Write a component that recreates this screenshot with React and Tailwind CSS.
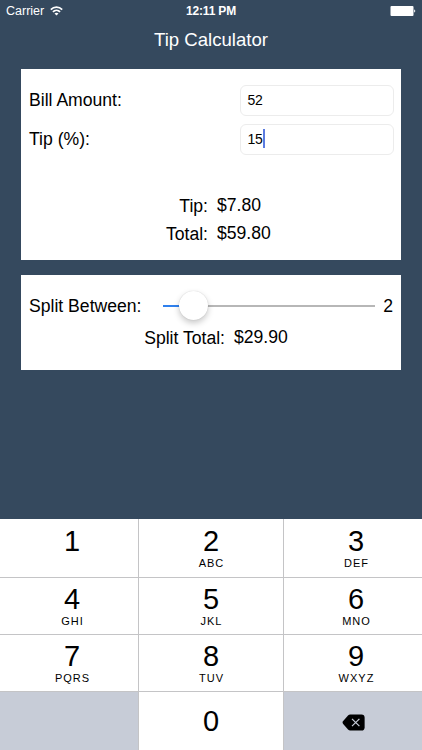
import React, { useState } from 'react';

const keys = [
  { digit: '1', letters: '' },
  { digit: '2', letters: 'ABC' },
  { digit: '3', letters: 'DEF' },
  { digit: '4', letters: 'GHI' },
  { digit: '5', letters: 'JKL' },
  { digit: '6', letters: 'MNO' },
  { digit: '7', letters: 'PQRS' },
  { digit: '8', letters: 'TUV' },
  { digit: '9', letters: 'WXYZ' },
];

// The outer columns run slightly past the middle of their cells
const columnPadding = ['pl-[6px]', 'pl-0', 'pl-[6px]'];

const MAX_SPLIT = 8;

function StatusBar() {
  return (
    <div className="grid h-[22px] grid-cols-3 items-center pl-[6px] pr-[6px] text-white">
      <div className="flex items-center gap-[6px]">
        <span className="text-[12.5px] leading-[22px]">Carrier</span>
        <svg width="13" height="10" viewBox="0 0 13 10" fill="none" stroke="currentColor" strokeWidth="1.7">
          <path d="M0.8 3.6C4 0.4 9 0.4 12.2 3.6" />
          <path d="M2.9 5.9C4.9 3.9 8.1 3.9 10.1 5.9" />
          <path d="M6.5 9.4L4.5 7.4C5.6 6.4 7.4 6.4 8.5 7.4Z" fill="currentColor" stroke="none" />
        </svg>
      </div>
      <span className="text-center text-[12px] font-bold leading-[22px] tracking-[-0.15px]">12:11 PM</span>
      <svg className="justify-self-end" width="26" height="10" viewBox="0 0 26 10" fill="currentColor">
        <rect x="0.5" y="0" width="23" height="10" rx="1" />
        <path d="M24.2 3.4C25.6 3.8 25.6 6.2 24.2 6.6Z" />
      </svg>
    </div>
  );
}

function Field({ label, value, focused, onFocus }) {
  return (
    <div className="flex h-[31px] items-center justify-between pl-2 pr-[7px]">
      <span className="text-[17.6px]">{label}</span>
      <div
        onClick={onFocus}
        className="flex h-[31px] w-[154px] items-center rounded-[6px] border border-[#ececec] pl-[6.5px]"
      >
        <span className="text-[14px] tracking-[-0.2px]">{value}</span>
        {focused && <span className="-mt-[2px] h-[19px] w-[2px] bg-[#5b7be0]" />}
      </div>
    </div>
  );
}

function Result({ label, value, labelWidth }) {
  return (
    <div className="flex h-[28px] items-center gap-[9px] text-[17.6px]">
      <span className={`${labelWidth} text-right`}>{label}</span>
      <span className="-mt-px">{value}</span>
    </div>
  );
}

function Key({ digit, letters, padding, onPress }) {
  return (
    <button onClick={() => onPress(digit)} className={`flex flex-col items-center bg-white ${padding}`}>
      <span className="text-[29px] leading-[32px]">{digit}</span>
      {letters && <span className="mt-[-1px] pl-px text-[11px] leading-[14px] tracking-[1px]">{letters}</span>}
    </button>
  );
}

export default function App() {
  const [values, setValues] = useState({ bill: '52', tip: '15' });
  const [active, setActive] = useState('tip');
  const [split, setSplit] = useState(2);

  const bill = Number(values.bill) || 0;
  const tip = (bill * (Number(values.tip) || 0)) / 100;
  const total = bill + tip;
  const progress = (split - 1) / (MAX_SPLIT - 1);

  const press = (digit) => setValues({ ...values, [active]: values[active] + digit });
  const erase = () => setValues({ ...values, [active]: values[active].slice(0, -1) });

  return (
    <div className="flex h-[750px] w-[422px] flex-col overflow-hidden bg-[#35495e] font-['Liberation_Sans',Arial,sans-serif] text-black">
      <StatusBar />
      <h1 className="h-[47px] text-center text-[18.6px] leading-[36px] text-white">Tip Calculator</h1>

      {/* Bill and tip */}
      <section className="mx-[21px] h-[191px] shrink-0 bg-white pt-4">
        <div className="flex flex-col gap-2">
          <Field label="Bill Amount:" value={values.bill} focused={active === 'bill'} onFocus={() => setActive('bill')} />
          <Field label="Tip (%):" value={values.tip} focused={active === 'tip'} onFocus={() => setActive('tip')} />
        </div>
        <div className="mt-[37px]">
          <Result label="Tip:" value={`$${tip.toFixed(2)}`} labelWidth="w-[187px]" />
          <Result label="Total:" value={`$${total.toFixed(2)}`} labelWidth="w-[187px]" />
        </div>
      </section>

      {/* Split */}
      <section className="mx-[21px] mt-[15px] h-[95px] shrink-0 bg-white pt-[15px]">
        <div className="flex h-8 items-center pl-2 pr-[8px] text-[17.6px]">
          <span className="w-[134px]">Split Between:</span>
          <div className="relative flex h-8 w-[212px] items-center">
            <div className="h-[2px] w-full bg-[#b7b7b7]">
              <div className="h-full bg-[#2f80ed]" style={{ width: `${progress * 100}%` }} />
            </div>
            <div
              className="absolute top-[1px] h-[29px] w-[29px] rounded-full bg-white shadow-[0_3px_6px_rgba(0,0,0,0.22),0_0_1px_rgba(0,0,0,0.2)]"
              style={{ left: `${progress * 212 - 14}px` }}
            />
            <input
              type="range"
              min="1"
              max={MAX_SPLIT}
              value={split}
              onChange={(e) => setSplit(Number(e.target.value))}
              className="absolute inset-0 w-full opacity-0"
            />
          </div>
          <span className="ml-auto">{split}</span>
        </div>
        <div className="mt-[2px]">
          <Result label="Split Total:" value={`$${(total / split).toFixed(2)}`} labelWidth="w-[204px]" />
        </div>
      </section>

      {/* Number pad */}
      <div className="mt-auto grid h-[231px] shrink-0 grid-cols-[138px_144px_138px] grid-rows-[58px_56px_56px_58px] gap-px bg-[#c4c4c6]">
        {keys.map((key, index) => (
          <Key
            key={key.digit}
            digit={key.digit}
            letters={key.letters}
            padding={`${columnPadding[index % 3]} ${index < 3 ? 'pt-[6px]' : 'pt-[5px]'}`}
            onPress={press}
          />
        ))}
        <div className="bg-[#c7ccd7]" />
        <button onClick={() => press('0')} className="flex justify-center bg-white pt-[13px] text-[29px] leading-[32px]">
          0
        </button>
        <button onClick={erase} className="flex items-center justify-center bg-[#c7ccd7] pt-[2px]">
          <svg width="23" height="17" viewBox="0 0 23 17">
            <path d="M8.2 0.4H19.5Q22.6 0.4 22.6 3.5V13.5Q22.6 16.6 19.5 16.6H8.2Q7 16.6 6 15.6L1 9.7Q0 8.5 1 7.3L6 1.4Q7 0.4 8.2 0.4Z" fill="#000" />
            <path d="M10 4.8L17.4 12.2M17.4 4.8L10 12.2" stroke="#c7ccd7" strokeWidth="1.2" />
          </svg>
        </button>
      </div>
    </div>
  );
}
